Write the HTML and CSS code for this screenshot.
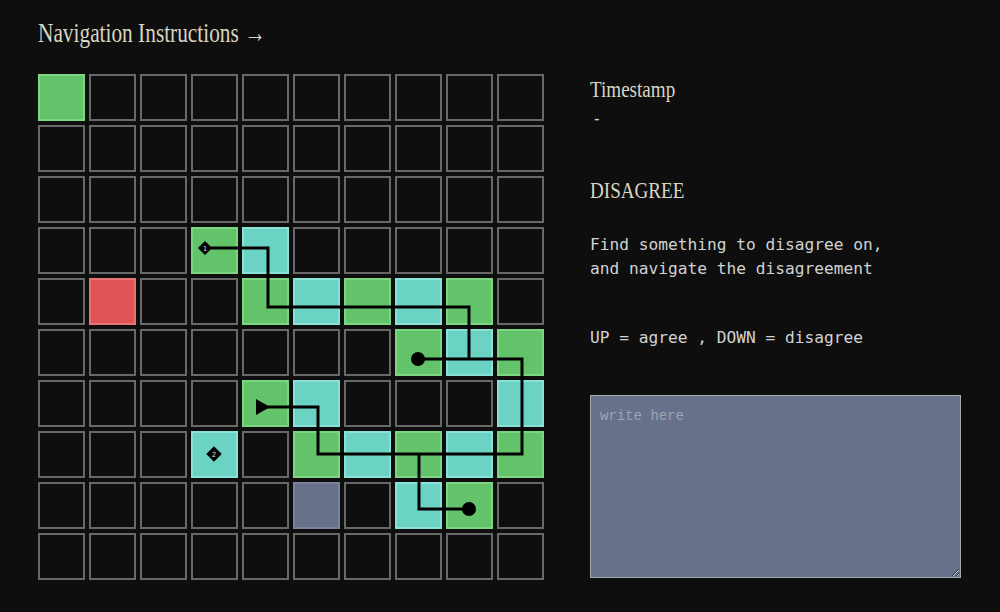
FILE: index.html
```html
<!DOCTYPE html>
<html>
<head>
<meta charset="utf-8">
<link rel="stylesheet" href="styles.css">
</head>
<body>
<div class="page">
  <h1 class="title"><span class="title-text">Navigation Instructions →</span></h1>
  <div class="main">
    <div class="board">
      <div class="grid">
        <div class="cell green"></div><div class="cell"></div><div class="cell"></div><div class="cell"></div><div class="cell"></div><div class="cell"></div><div class="cell"></div><div class="cell"></div><div class="cell"></div><div class="cell"></div>
        <div class="cell"></div><div class="cell"></div><div class="cell"></div><div class="cell"></div><div class="cell"></div><div class="cell"></div><div class="cell"></div><div class="cell"></div><div class="cell"></div><div class="cell"></div>
        <div class="cell"></div><div class="cell"></div><div class="cell"></div><div class="cell"></div><div class="cell"></div><div class="cell"></div><div class="cell"></div><div class="cell"></div><div class="cell"></div><div class="cell"></div>
        <div class="cell"></div><div class="cell"></div><div class="cell"></div><div class="cell green"></div><div class="cell teal"></div><div class="cell"></div><div class="cell"></div><div class="cell"></div><div class="cell"></div><div class="cell"></div>
        <div class="cell"></div><div class="cell red"></div><div class="cell"></div><div class="cell"></div><div class="cell green"></div><div class="cell teal"></div><div class="cell green"></div><div class="cell teal"></div><div class="cell green"></div><div class="cell"></div>
        <div class="cell"></div><div class="cell"></div><div class="cell"></div><div class="cell"></div><div class="cell"></div><div class="cell"></div><div class="cell"></div><div class="cell green"></div><div class="cell teal"></div><div class="cell green"></div>
        <div class="cell"></div><div class="cell"></div><div class="cell"></div><div class="cell"></div><div class="cell green"></div><div class="cell teal"></div><div class="cell"></div><div class="cell"></div><div class="cell"></div><div class="cell teal"></div>
        <div class="cell"></div><div class="cell"></div><div class="cell"></div><div class="cell teal"></div><div class="cell"></div><div class="cell green"></div><div class="cell teal"></div><div class="cell green"></div><div class="cell teal"></div><div class="cell green"></div>
        <div class="cell"></div><div class="cell"></div><div class="cell"></div><div class="cell"></div><div class="cell"></div><div class="cell slate"></div><div class="cell"></div><div class="cell teal"></div><div class="cell green"></div><div class="cell"></div>
        <div class="cell"></div><div class="cell"></div><div class="cell"></div><div class="cell"></div><div class="cell"></div><div class="cell"></div><div class="cell"></div><div class="cell"></div><div class="cell"></div><div class="cell"></div>
      </div>
      <svg class="paths" width="506" height="506" viewBox="0 0 506 506">
        <g fill="none" stroke="#000" stroke-width="3">
          <polyline points="167,174 230,174 230,233 431,233 431,285"/>
          <polyline points="380,285 484,285 484,380 280,380 280,333 222,333"/>
          <polyline points="381,380 381,435 431,435"/>
        </g>
        <g fill="#000">
          <rect x="162" y="169" width="10" height="10" transform="rotate(45 167 174)"/>
          <rect x="170.5" y="374.5" width="11" height="11" transform="rotate(45 176 380)"/>
          <circle cx="380" cy="285" r="7"/>
          <circle cx="431" cy="435" r="7"/>
          <polygon points="218,325 232,333 218,341"/>
        </g>
        <g fill="#ddd" font-family="DejaVu Sans, sans-serif" font-size="7" text-anchor="middle">
          <text x="167" y="176.5">1</text>
          <text x="176" y="382.5">2</text>
        </g>
      </svg>
    </div>
    <div class="side">
      <div class="serif timestamp">Timestamp</div>
      <div class="serif dash">-</div>
      <div class="serif mode">DISAGREE</div>
      <p class="mono desc">Find something to disagree on,<br>and navigate the disagreement</p>
      <p class="mono keys">UP = agree , DOWN = disagree</p>
      <textarea class="note" placeholder="write here"></textarea>
    </div>
  </div>
</div>
</body>
</html>
```

FILE: styles.css
```css
html, body {
  margin: 0;
  padding: 0;
  background: #0e0e0e;
  width: 1000px;
  height: 612px;
  overflow: hidden;
}

.page {
  padding: 13px 0 0 38px;
}

.title {
  margin: 0;
  height: 38px;
  font-weight: normal;
}

.title-text {
  display: inline-block;
  font-family: "Liberation Serif", serif;
  font-size: 27px;
  line-height: 30px;
  color: #d9d5c3;
  transform: scaleX(0.79);
  transform-origin: left center;
  white-space: nowrap;
}

.main {
  display: flex;
  gap: 46px;
  margin-top: 23px;
}

.board {
  position: relative;
  width: 506px;
  height: 506px;
}

.grid {
  display: grid;
  grid-template-columns: repeat(10, 47px);
  grid-auto-rows: 47px;
  gap: 4px;
}

.cell {
  box-sizing: border-box;
  border: 2px solid #686868;
  background: #0e0e0e;
}

.cell.green { background: #62c36b; border-color: #7dd483; }
.cell.teal { background: #6ad3c3; border-color: #8ae2d6; }
.cell.red { background: #df5455; border-color: #e87474; }
.cell.slate { background: #67718a; border-color: #7a8399; }

.paths {
  position: absolute;
  left: 0;
  top: 0;
}

.side {
  display: flex;
  flex-direction: column;
  padding-top: 2px;
}

.serif {
  font-family: "Liberation Serif", serif;
  color: #d9d5c3;
  font-size: 23px;
  line-height: 28px;
  white-space: nowrap;
  transform: scaleX(0.83);
  transform-origin: left center;
}

.dash {
  margin-top: 0;
  padding-left: 5px;
  font-size: 18px;
}

.mode {
  margin-top: 45px;
}

.mono {
  font-family: "DejaVu Sans Mono", monospace;
  font-size: 16.2px;
  line-height: 23.5px;
  color: #d2d2d2;
  margin: 0;
  white-space: nowrap;
}

.desc {
  margin-top: 28px;
}

.keys {
  margin-top: 46px;
}

.note {
  margin-top: 45px;
  width: 371px;
  height: 183px;
  box-sizing: border-box;
  background: #67728a;
  border: 1px solid #a6a9b0;
  padding: 12px 9px;
  font-family: "Liberation Mono", monospace;
  font-size: 14px;
  color: #e0e0e0;
  resize: both;
  outline: none;
}

.note::placeholder {
  color: #9ea4b1;
}
```
